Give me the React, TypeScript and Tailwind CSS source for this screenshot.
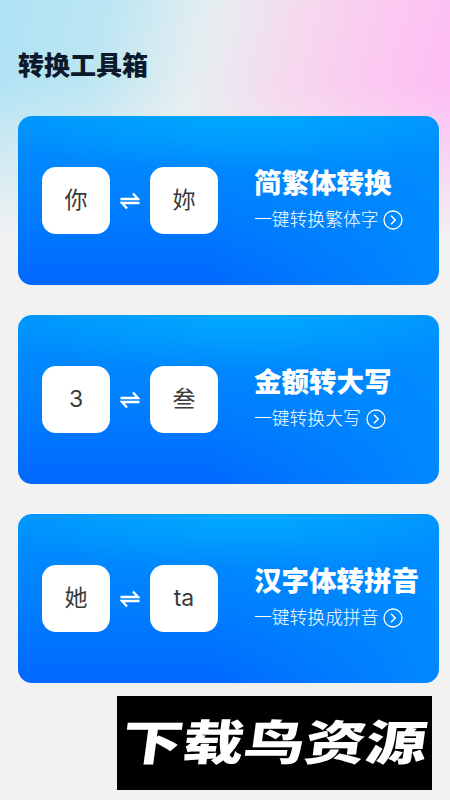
const CARDS = [
  { from: "你", to: "妳", title: "简繁体转换", desc: "一键转换繁体字" },
  { from: "3", to: "叁", title: "金额转大写", desc: "一键转换大写" },
  { from: "她", to: "ta", title: "汉字体转拼音", desc: "一键转换成拼音" },
];

function SwapIcon() {
  return (
    <svg width="20" height="18" viewBox="0 0 20 18" fill="none" stroke="white" strokeWidth="2.3">
      <path d="M0.5 7H18L13 1.5" />
      <path d="M19.5 11H2L7 16.5" />
    </svg>
  );
}

function ArrowCircle() {
  return (
    <svg width="20" height="20" viewBox="0 0 20 20" fill="none" stroke="white" strokeWidth="1.3">
      <circle cx="10" cy="10" r="9" />
      <path d="M8 5.8L12.2 10L8 14.2" strokeWidth="1.5" />
    </svg>
  );
}

function Tile({ text }: { text: string }) {
  return (
    <div className="w-[68px] h-[67px] rounded-[14px] bg-white flex items-center justify-center text-[23px] font-normal text-[#3a3a3a]">
      {text}
    </div>
  );
}

export default function App() {
  return (
    <div className="relative w-[450px] h-[800px] overflow-hidden bg-[#f2f2f2] font-['Inter','Noto_Sans_CJK_SC',sans-serif]">
      <div className="absolute inset-x-0 top-0 h-[240px] bg-[linear-gradient(to_bottom,rgba(242,242,242,0)_35%,#f2f2f2_100%),linear-gradient(105deg,#aee2f4_0%,#bde6f3_22%,#e6eef1_42%,#f6d8ee_60%,#fcc6f1_80%,#ffb6f6_100%)]" />

      <div className="relative px-[18px] pt-[47px]">
        <h1 className="text-[26px] leading-[34px] font-black text-[#0c1a2b] font-['Noto_Sans_CJK_SC',sans-serif]">
          转换工具箱
        </h1>

        <div className="mt-[35px] flex flex-col gap-[30px] w-[421px]">
          {CARDS.map((card) => (
            <div
              key={card.title}
              className="h-[169px] rounded-[14px] pl-[24px] flex items-center bg-[radial-gradient(ellipse_280px_55px_at_55%_0%,#00a9ff_0%,rgba(0,169,255,0)_100%),linear-gradient(to_left,rgba(0,140,255,0.9)_0%,rgba(0,140,255,0)_55%),linear-gradient(180deg,#0092fd_0%,#0080fe_50%,#0068ff_100%)]"
            >
              <Tile text={card.from} />
              <div className="w-[40px] flex justify-center">
                <SwapIcon />
              </div>
              <Tile text={card.to} />
              <div className="ml-[36px] -mt-[5px] text-white">
                <div className="text-[27.5px] leading-[36px] font-black whitespace-nowrap">{card.title}</div>
                <div className="mt-[7px] flex items-center gap-[5px] text-[17.8px] leading-[24px] font-light whitespace-nowrap">
                  {card.desc}
                  <ArrowCircle />
                </div>
              </div>
            </div>
          ))}
        </div>
      </div>

      <div className="absolute left-[117px] top-[696px] w-[315px] h-[94px] bg-black flex items-center justify-center">
        <span className="text-[61px] leading-none font-black text-white whitespace-nowrap -skew-x-[6deg] scale-y-[0.78]">下载鸟资源</span>
      </div>
    </div>
  );
}
